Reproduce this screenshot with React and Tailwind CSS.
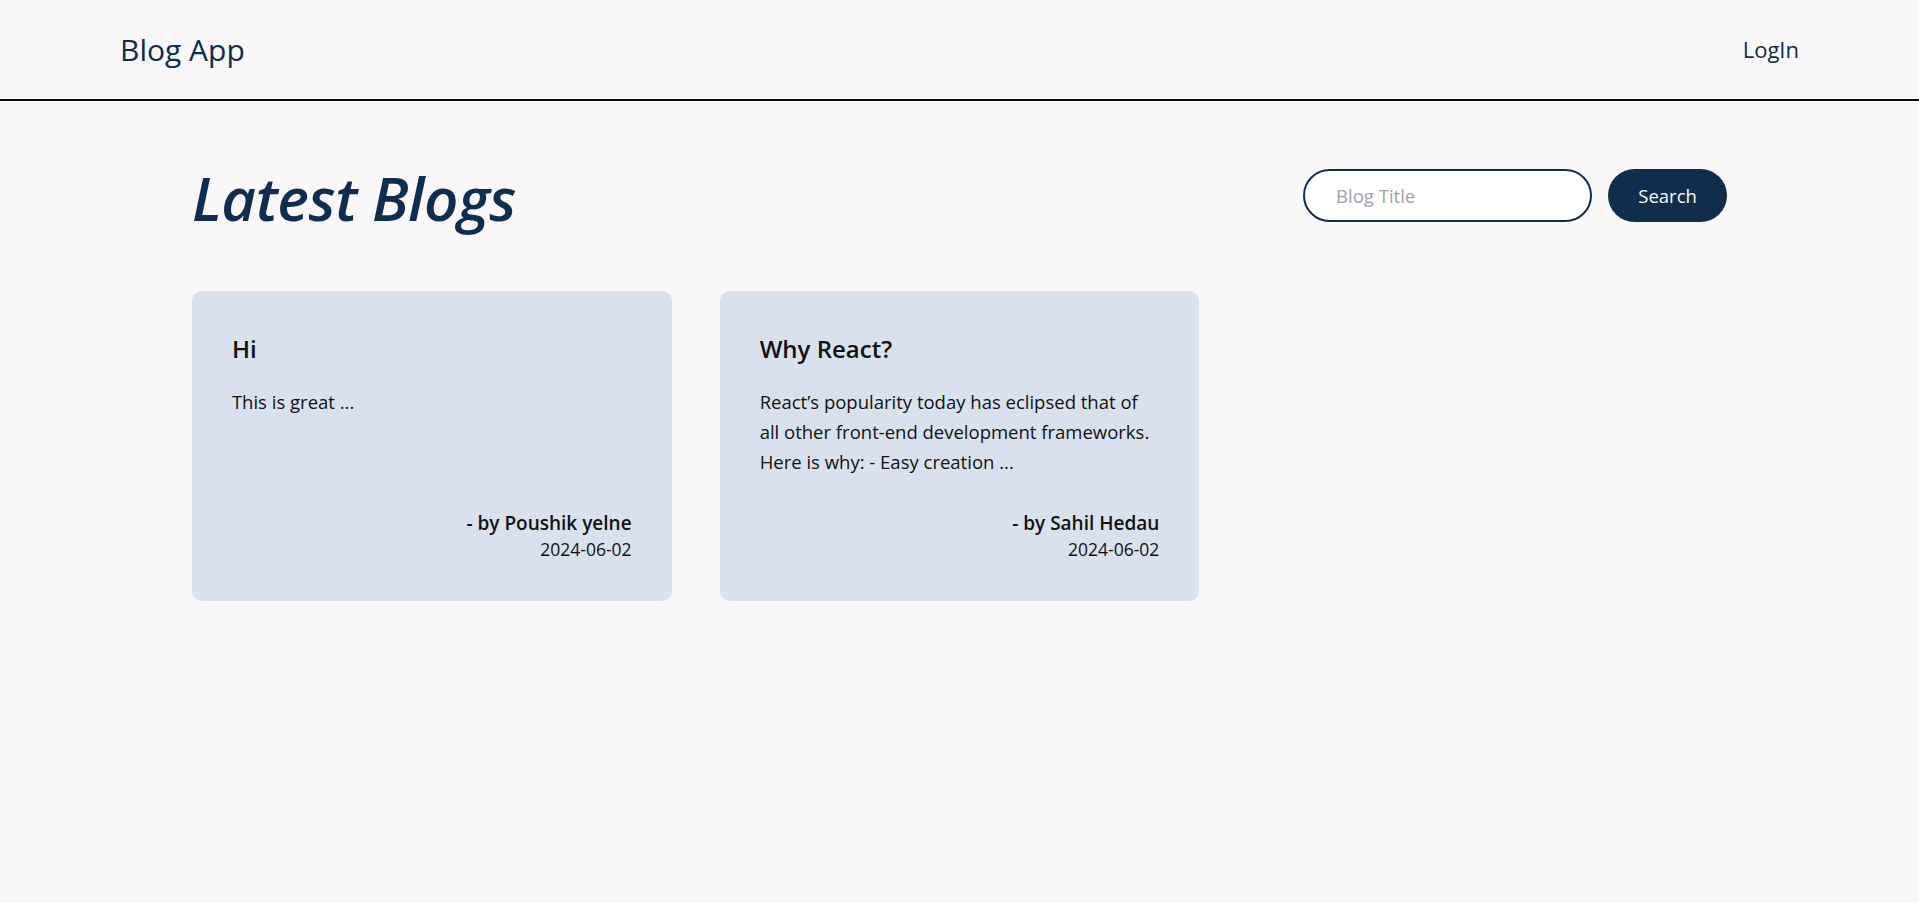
import { useState } from 'react';

const blogs = [
  {
    id: 1,
    title: 'Hi',
    body: 'This is great ...',
    author: 'Poushik yelne',
    date: '2024-06-02',
  },
  {
    id: 2,
    title: 'Why React?',
    body: 'React’s popularity today has eclipsed that of all other front-end development frameworks. Here is why: - Easy creation ...',
    author: 'Sahil Hedau',
    date: '2024-06-02',
  },
];

function BlogCard({ blog }) {
  return (
    <div className="bg-[#dae1ee] rounded-[10px] p-10 flex flex-col text-[#111111]">
      <h3 className="text-[24px] leading-9 font-semibold">{blog.title}</h3>
      <p className="mt-[20px] text-[18.5px] leading-[30px]">{blog.body}</p>
      <div className="mt-auto pt-[32px] text-right">
        <p className="text-[19px] leading-7 font-semibold">- by {blog.author}</p>
        <p className="text-[17.5px] leading-6 font-medium">{blog.date}</p>
      </div>
    </div>
  );
}

export default function App() {
  const [query, setQuery] = useState('');

  const list = blogs.filter(b => b.title.toLowerCase().includes(query.toLowerCase()));

  return (
    <div className="min-h-screen bg-[#f9f7f8] font-['Open_Sans',sans-serif]">
      {/* Header */}
      <header className="h-[101px] border-b-2 border-[#0a0a16] flex items-center justify-between px-[120px] text-[#0f2c4e]">
        <span className="text-[30px] leading-none">Blog App</span>
        <button className="text-[22px] font-medium">LogIn</button>
      </header>

      <main className="w-4/5 mx-auto">
        {/* Title + search */}
        <div className="flex items-start justify-between pt-[61px]">
          <h1 className="text-[60px] leading-[72px] font-semibold italic text-[#102d4f] tracking-[-0.5px]">Latest Blogs</h1>
          <div className="flex items-center gap-4 mt-[7px]">
            <input
              value={query}
              onChange={e => setQuery(e.target.value)}
              placeholder="Blog Title"
              className="w-[289px] h-[53px] rounded-full border-2 border-[#112d4e] bg-white pl-[31px] pr-4 text-[18.5px] placeholder:text-[#a3a1aa] focus:outline-none"
            />
            <button className="w-[119px] h-[53px] rounded-full bg-[#112d4e] text-white text-[18.5px]">Search</button>
          </div>
        </div>

        {/* Cards */}
        <div className="grid grid-cols-3 gap-12 mt-[57px]">
          {list.map(b => <BlogCard key={b.id} blog={b} />)}
        </div>
      </main>
    </div>
  );
}
